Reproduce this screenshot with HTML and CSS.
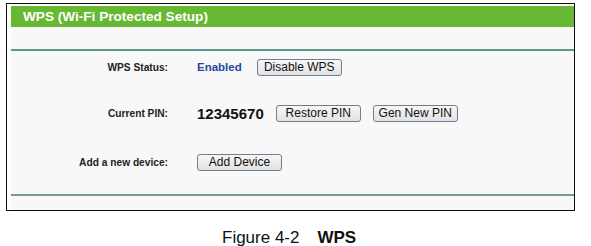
FILE: index.html
```html
<!DOCTYPE html>
<html lang="en">
<head>
    <meta charset="UTF-8">
    <meta name="viewport" content="width=device-width, initial-scale=1.0">
    <title>WPS (Wi-Fi Protected Setup)</title>
    <link rel="stylesheet" href="styles.css">
</head>
<body>
    <div class="frame">
        <div class="panel">
            <div class="panel-title">WPS (Wi-Fi Protected Setup)</div>
            <div class="panel-top"></div>

            <div class="settings">
                <div class="row">
                    <span class="label">WPS Status:</span>
                    <span class="value">
                        <span class="status">Enabled</span>
                        <button class="btn">Disable WPS</button>
                    </span>
                </div>
                <div class="row">
                    <span class="label">Current PIN:</span>
                    <span class="value">
                        <span class="pin">12345670</span>
                        <button class="btn">Restore PIN</button>
                        <button class="btn">Gen New PIN</button>
                    </span>
                </div>
                <div class="row row-last">
                    <span class="label">Add a new device:</span>
                    <span class="value">
                        <button class="btn">Add Device</button>
                    </span>
                </div>
            </div>

            <div class="panel-bottom"></div>
        </div>
    </div>

    <p class="caption">Figure 4-2<span class="caption-name">WPS</span></p>
</body>
</html>
```

FILE: styles.css
```css
body {
    margin: 0;
    background-color: #fff;
    font-family: Arial, "Liberation Sans", sans-serif;
    color: #222;
}
.frame {
    width: 563px;
    height: 204px;
    margin: 3px 0 0 6px;
    padding: 2px 0 0 4px;
    border: 1px solid #111;
}
.panel {
    background-color: #f8f8f8;
    height: 204px;
}
.panel-title {
    height: 21px;
    line-height: 21px;
    padding-left: 12px;
    background-color: #67b832;
    color: #fff;
    font-size: 13.6px;
    font-weight: bold;
}
.panel-top {
    height: 22px;
    border-bottom: 2px solid #5c978a;
}
.settings {
    padding-top: 1px;
}
.row {
    display: grid;
    grid-template-columns: 157px auto;
    column-gap: 29px;
    align-items: center;
    height: 30px;
    margin-bottom: 16px;
}
.row-last {
    margin-top: 19px;
    margin-bottom: 0;
}
.label {
    text-align: right;
    font-size: 10.2px;
    font-weight: bold;
    color: #222;
}
.value {
    display: flex;
    align-items: center;
}
.status {
    font-size: 11.5px;
    font-weight: bold;
    color: #26479b;
    margin-right: 15px;
}
.pin {
    font-size: 15px;
    font-weight: bold;
    color: #111;
    margin-right: 12px;
}
.btn {
    width: 85px;
    height: 17px;
    padding: 0;
    margin-right: 12px;
    border: 1px solid #6d7f94;
    border-radius: 3px;
    background: linear-gradient(#f7f7f7, #e2e2e2);
    font-family: Arial, "Liberation Sans", sans-serif;
    font-size: 12px;
    line-height: 15px;
    text-align: center;
    color: #111;
}
.panel-bottom {
    margin-top: 17px;
    border-top: 2px solid #6c9f8f;
}
.caption {
    margin: 17px 0 0;
    padding-left: 222px;
    font-size: 17px;
    color: #111;
}
.caption-name {
    font-weight: bold;
    margin-left: 18px;
}
```
